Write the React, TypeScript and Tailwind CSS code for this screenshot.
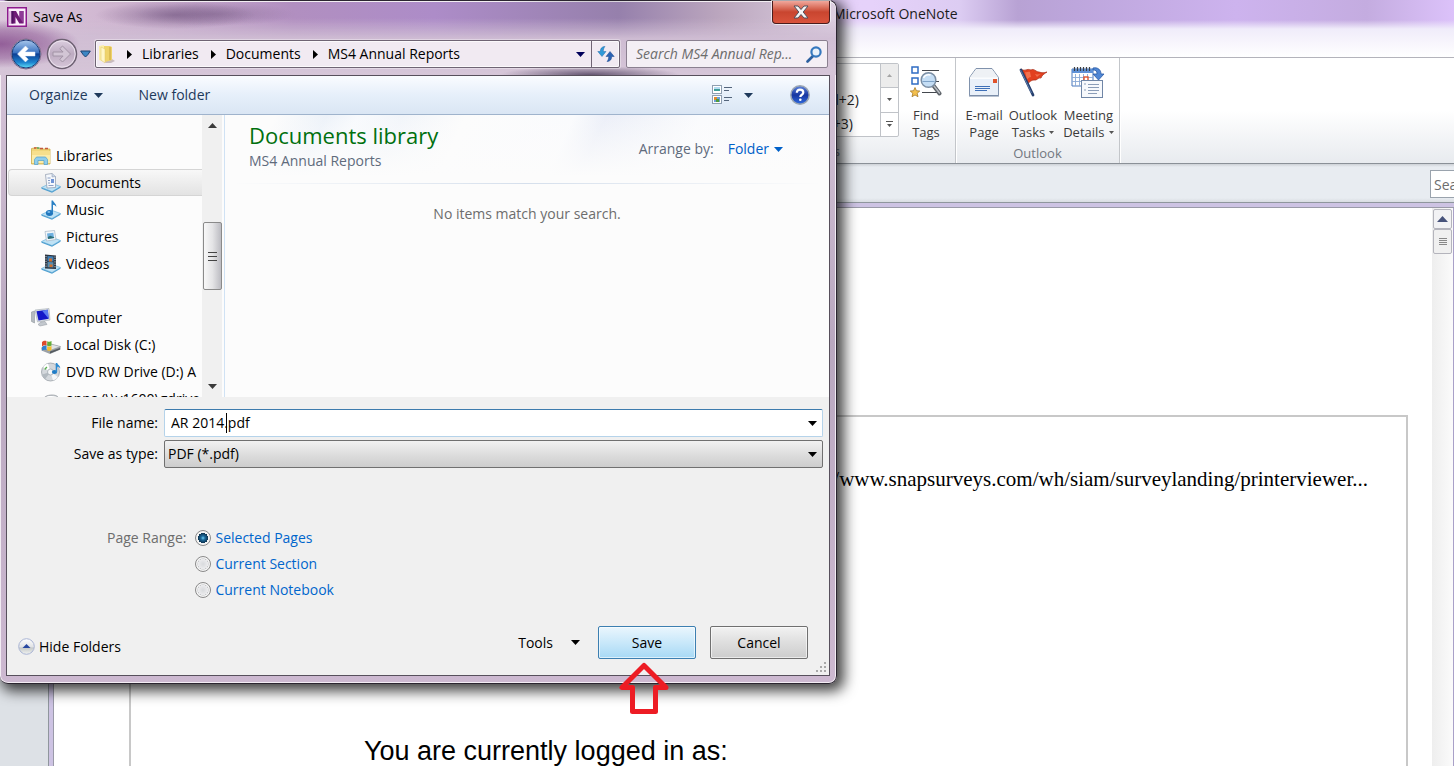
import React from "react";

const UI = "font-['Open_Sans','Noto_Sans',sans-serif]";

function Caret({ className = "" }: { className?: string }) {
  return (
    <svg width="9" height="5" viewBox="0 0 9 5" className={className} aria-hidden="true">
      <path d="M0 0h9L4.500 5z" fill="currentColor" />
    </svg>
  );
}

function Crumb({ children }: { children: string }) {
  return (
    <li className="flex items-center">
      <svg width="5" height="9" viewBox="0 0 5 9" className="mr-2.5" aria-hidden="true">
        <path d="M0 0v9l5-4.500z" fill="#000" />
      </svg>
      <a href="#crumb" className="mr-3">{children}</a>
    </li>
  );
}

/* ---------- dialog icons ---------- */

function OneNoteIcon() {
  return (
    <svg width="20" height="20" viewBox="0 0 20 20" aria-hidden="true">
      <rect x="0.75" y="0.75" width="18.500" height="18.500" fill="#fbeefb" stroke="#8d1a8d" strokeWidth="1.500" />
      <path d="M2 4h3v13H2z" fill="#e3bfe4" />
      <path d="M4.500 4H9l3.500 6.500V4h4v12.500h-4.200L8.500 10v6.500h-4z" fill="#6f1a76" />
      <path d="M12.500 4h4v12.500l-4-6z" fill="#8f3a97" />
      <path d="M4.500 4h2v12.500h-2z" fill="#4e1260" />
    </svg>
  );
}

function NavButtons() {
  return (
    <div className="flex items-center">
      <button aria-label="Back" className="size-8">
        <svg width="32" height="32" viewBox="0 0 32 32">
          <defs>
            <linearGradient id="nav-blue" x1="0" y1="0" x2="0" y2="1">
              <stop offset="0" stopColor="#a9c8ec" />
              <stop offset="0.45" stopColor="#3a72c0" />
              <stop offset="0.5" stopColor="#0c3f94" />
              <stop offset="0.8" stopColor="#1d84cf" />
              <stop offset="1" stopColor="#5fe0f8" />
            </linearGradient>
          </defs>
          <circle cx="16" cy="16" r="15" fill="#f0e4f2" stroke="#7c6a86" />
          <circle cx="16" cy="16" r="14" fill="url(#nav-blue)" stroke="#1b3a78" />
          <path d="M15.500 8 7.500 16l8 8 2.700-2.700-3.300-3.300H25v-4H14.900l3.300-3.300z" fill="#fff" stroke="#dce8f8" strokeWidth="0.500" strokeLinejoin="round" />
        </svg>
      </button>
      <button aria-label="Forward" className="ml-1 size-8">
        <svg width="32" height="32" viewBox="0 0 32 32">
          <defs>
            <linearGradient id="nav-grey" x1="0" y1="0" x2="0" y2="1">
              <stop offset="0" stopColor="#dccfe0" />
              <stop offset="0.5" stopColor="#bdabc1" />
              <stop offset="1" stopColor="#d8c8da" />
            </linearGradient>
          </defs>
          <circle cx="16" cy="16" r="14.500" fill="url(#nav-grey)" stroke="#6d6172" strokeWidth="1.500" />
          <circle cx="16" cy="16" r="13.200" fill="none" stroke="#ece2ee" />
          <path d="M16.500 8 24.500 16l-8 8-2.700-2.700 3.300-3.300H7v-4h10.100l-3.300-3.300z" fill="#d2c5d5" stroke="#a294a6" strokeLinejoin="round" />
        </svg>
      </button>
      <button aria-label="Recent locations" className="ml-0.5">
        <svg width="11" height="8" viewBox="0 0 11 8">
          <path d="M0.700 1h9.600L8 4.500 5.500 7 3 4.500z" fill="#3b86c4" stroke="#1c4270" strokeLinejoin="round" />
        </svg>
      </button>
    </div>
  );
}

function FolderIcon() {
  return (
    <svg width="18" height="20" viewBox="0 0 18 20" aria-hidden="true">
      <path d="M9 15h5l3 2-4 2H7z" fill="#c9bcbf" />
      <path d="M1 2l5-1v17l-5-2z" fill="#fbeea8" />
      <path d="M6 2h6l2 1v13l-7 2H6z" fill="#efd36b" />
      <path d="M3 3l4 2v14l-4-3z" fill="#fff6c8" stroke="#dcc469" strokeWidth="0.500" />
      <path d="M12 3v13" stroke="#c9a63c" />
    </svg>
  );
}

function RefreshIcon() {
  return (
    <svg width="18" height="16" viewBox="0 0 18 16" aria-hidden="true">
      <path d="M8 0.500C4.500.5 3.300 3 3.300 5.500H.8L5 10.500l4-5H6.300C6.300 3.500 6.800 1.800 8 .5z" fill="#2f9ad8" stroke="#246ba8" strokeWidth="0.500" />
      <path d="M10 15.500c3.500 0 4.700-2.500 4.700-5h2.500L13 5.500l-4 5h2.700c0 2-.5 3.700-1.700 5z" fill="#2a62b4" stroke="#1e4a8c" strokeWidth="0.500" />
    </svg>
  );
}

function SearchIcon() {
  return (
    <svg width="17" height="17" viewBox="0 0 17 17" aria-hidden="true">
      <path d="M7 10l-5.500 5.500" stroke="#2b5f9f" strokeWidth="2.600" strokeLinecap="round" />
      <circle cx="10" cy="6" r="4.600" fill="#e8f1fa" stroke="#3578be" strokeWidth="2.200" />
    </svg>
  );
}

function ViewIcon() {
  return (
    <svg width="21" height="20" viewBox="0 0 21 20" aria-hidden="true">
      <rect x="0.500" y="0.500" width="9" height="8" fill="#fff" stroke="#8f9eb0" />
      <rect x="2" y="2" width="6" height="2" fill="#b5dcf3" />
      <rect x="2" y="4" width="6" height="2" fill="#3f9d96" />
      <rect x="0.500" y="10.500" width="9" height="8" fill="#fff" stroke="#8f9eb0" />
      <rect x="2" y="12" width="6" height="5" fill="#6e9fd8" />
      <rect x="2" y="12" width="3" height="3" fill="#e08a2e" />
      <rect x="4" y="14" width="3" height="3" fill="#4f9c3a" />
      <path d="M12 2.500h8M12 5.500h5M12 12.500h8M12 15.500h5" stroke="#54657c" />
    </svg>
  );
}

function HelpIcon() {
  return (
    <svg width="20" height="20" viewBox="0 0 20 20" aria-hidden="true">
      <defs>
        <linearGradient id="help-fill" x1="0" y1="0" x2="0" y2="1">
          <stop offset="0" stopColor="#5f86dc" />
          <stop offset="0.5" stopColor="#1736a0" />
          <stop offset="1" stopColor="#2f6be0" />
        </linearGradient>
      </defs>
      <circle cx="10" cy="10" r="9.200" fill="url(#help-fill)" stroke="#9aa5b2" strokeWidth="1.500" />
      <path d="M6.800 7.800C6.800 5.600 8.200 4.600 10 4.600s3.300 1 3.300 2.900c0 2.300-3 2.200-3 4.500" fill="none" stroke="#fff" strokeWidth="2.200" />
      <circle cx="10.300" cy="14.700" r="1.300" fill="#fff" />
    </svg>
  );
}

function Tray() {
  return (
    <>
      <path d="M0.500 14.500 10 10l9.500 3.500L11 18.500z" fill="#bfe2f5" stroke="#6fb4dc" strokeWidth="0.700" />
      <path d="M0.500 14.500 11 18.500v1.200L0.500 15.700zM11 18.500l8.500-5v1.200l-8.500 5z" fill="#4f9fd0" />
    </>
  );
}

function TreeIcon({ kind }: { kind: string }) {
  return (
    <svg width="20" height="20" viewBox="0 0 20 20" className="shrink-0" aria-hidden="true">
      {kind === "libraries" && (
        <>
          <path d="M0.500 2.500 6 1.500l3 1.500h10v15H0.500z" fill="#f0d67a" stroke="#cfae4c" strokeWidth="0.800" />
          <path d="M3 2h2.500M9 2.500h3M14 2.500h3" stroke="#c25a3c" strokeWidth="1.400" />
          <path d="M6 2h2.500" stroke="#4f9f56" strokeWidth="1.400" />
          <path d="M1 5h18v12H1z" fill="#fbecab" />
          <path d="M1 5h18v4H1z" fill="#f6df8c" />
          <path d="M3.500 18.500v-5l2-2.500h9l2 2.500v5h-3.500v-4H7v4z" fill="#8fcdec" stroke="#4d9fcd" strokeWidth="0.700" />
        </>
      )}
      {kind === "documents" && (
        <>
          <Tray />
          <path d="M4.500 1.500 11 0.500l3.500 3v11l-8.500.5z" fill="#f5f8fc" stroke="#8a97ab" strokeWidth="0.700" />
          <path d="M11 .5v3.500l3.500-.5" fill="#c9d6e8" stroke="#8a97ab" strokeWidth="0.500" />
          <path d="M6.500 5h3M7 7.500h2M7 10h2M7.500 12.500h5" stroke="#8094bd" strokeWidth="0.900" />
          <path d="M10 6h3v4h-3z" fill="#6f94d6" />
        </>
      )}
      {kind === "music" && (
        <>
          <Tray />
          <ellipse cx="8.500" cy="13" rx="3.600" ry="2.900" fill="#1f76bd" />
          <path d="M10.500 13V0.500h1.500c.3 2 3.500 3 3.300 6.500-.8-1.500-2-2.200-3.300-2.300V13z" fill="#2a80c4" />
          <ellipse cx="7.800" cy="12" rx="1.500" ry="0.900" fill="#79b9e8" />
        </>
      )}
      {kind === "pictures" && (
        <>
          <Tray />
          <path d="M4 4.500 13.500 3.500l1.500 9-9.500 1.500z" fill="#f3f6f9" stroke="#a5b5c4" strokeWidth="0.700" />
          <path d="M6 6.500l6.300-.7.8 5.200-6.200.9z" fill="#6fb0e0" />
          <path d="M6.700 10l2.600-1.200 3.800 1.400.1.900-6.200.9z" fill="#2d6f78" />
        </>
      )}
      {kind === "videos" && (
        <>
          <Tray />
          <path d="M4 0.500 15 1.500v13.500l-11-.5z" fill="#2d3540" />
          <path d="M5 2v12M14 2.500v12" stroke="#c7d0d8" strokeWidth="1" strokeDasharray="1.200 1.200" />
          <path d="M6.500 2l6 .5v5l-6-.3z" fill="#3f7fb6" />
          <path d="M6.500 8l6 .3v5.200l-6-.2z" fill="#5a8fb2" />
          <path d="M8 4.500h3v3H8zM8.500 10.500h3v2.500h-3z" fill="#d0702e" />
        </>
      )}
      {kind === "computer" && (
        <>
          <path d="M0.500 4 3.500 3v12l-3-1.500z" fill="#b4bac0" stroke="#858c93" strokeWidth="0.500" />
          <path d="M4 2l14-1.500 1 11.500-12.500 2z" fill="#d7dce2" stroke="#a5acb4" strokeWidth="0.600" />
          <path d="M5.500 3.200l11.300-1.400.9 9-10.200 1.700z" fill="#1418c8" />
          <path d="M11 2.600l5.800-.8.9 9z" fill="#5b7cf0" />
          <path d="M10 14l4-.5 2 3-7 1.500-2-1.500z" fill="#c3c8ce" stroke="#8e959d" strokeWidth="0.500" />
        </>
      )}
      {kind === "disk" && (
        <>
          <path d="M0.500 13 8 8.500l11.500 3v3L9 19l-8.500-3.500z" fill="#9ba1a6" />
          <path d="M0.500 13 8 8.500l11.500 3L9 15.500z" fill="#dfe3e6" stroke="#888e93" strokeWidth="0.500" />
          <path d="M9 16.500l10-3.500v1.500L9 18.500z" fill="#555b60" />
          <path d="M1 7c1.500-1.500 3-1.500 4.500-1v4.500c-1.500-.5-3-.5-4.500 1z" fill="#dc4a2c" />
          <path d="M6.200 6.200C8 7 9 7 10.500 6v4.500c-1.500 1-2.500 1-4.300.2z" fill="#64ad38" />
          <path d="M1 12c1.500-1.500 3-1.500 4.500-1v4c-1.500-.5-3-.5-4.500.5z" fill="#2f7fd0" />
          <path d="M6.200 11.200c1.800.8 2.800.8 4.300-.2v4c-1.500 1-2.500 1-4.300.2z" fill="#f3bd2c" />
        </>
      )}
      {kind === "dvd" && (
        <>
          <circle cx="9.500" cy="10" r="9" fill="#d4d8dc" stroke="#8f979e" strokeWidth="0.700" />
          <path d="M9.500 10 2 5a9 9 0 0 1 5-3.600z" fill="#fff" />
          <path d="M9.500 10l7.500 5a9 9 0 0 1-5 3.600z" fill="#f5f7f9" />
          <path d="M9.500 10 1 12.500a9 9 0 0 0 3 4.700z" fill="#b3bac0" />
          <circle cx="9.500" cy="10" r="3" fill="#f4f6f8" stroke="#9aa2a9" strokeWidth="0.700" />
          <path d="M4 7.500a6 6 0 0 1 2-2.500" stroke="#58b04c" strokeWidth="1.500" fill="none" />
          <ellipse cx="13.500" cy="10" rx="2.600" ry="2.100" fill="#1f7cc6" />
          <path d="M14.700 10V1h1.500c.3 1.700 3.300 2.500 3 5.500-.8-1.300-1.900-1.700-3-1.700V10z" fill="#2b8ad2" />
        </>
      )}
      {kind === "network" && (
        <>
          <path d="M2 12c0-4 4-6 9-6s7 2 7 5v4H2z" fill="#c9cdd1" stroke="#8f959b" strokeWidth="0.700" />
          <path d="M4 10c2-2.500 7-3 11-1.500" stroke="#fff" strokeWidth="1.500" fill="none" />
        </>
      )}
    </svg>
  );
}

const tree = [
  { label: "Libraries", kind: "libraries", root: true },
  { label: "Documents", kind: "documents", selected: true },
  { label: "Music", kind: "music" },
  { label: "Pictures", kind: "pictures" },
  { label: "Videos", kind: "videos" },
  { label: "Computer", kind: "computer", root: true, gap: true },
  { label: "Local Disk (C:)", kind: "disk" },
  { label: "DVD RW Drive (D:) A", kind: "dvd" },
  { label: "apps (\\\\v1600\\gdrive", kind: "network" },
];

function FolderTree() {
  return (
    <nav aria-label="Folders" className="min-w-0 flex-1 overflow-hidden pt-[27px]">
      <ul className="flex flex-col">
        {tree.map((n) => (
          <li key={n.label} className={n.gap ? "mt-[27px]" : ""}>
            <a
              href="#folder"
              className={
                "ml-px flex h-[27px] items-center gap-[5px] whitespace-nowrap border " +
                (n.root ? "pl-[22px] " : "pl-8 ") +
                (n.selected
                  ? "rounded-l-sm border-r-0 border-[#d5d5d5] bg-linear-to-b from-[#f8f8f8] to-[#e3e3e3]"
                  : "border-transparent")
              }
            >
              <TreeIcon kind={n.kind} />
              <span>{n.label}</span>
            </a>
          </li>
        ))}
      </ul>
    </nav>
  );
}

function TreeScrollbar() {
  return (
    <div className="flex w-5 flex-col items-center bg-[#f0f0f0] pt-2 pb-2" aria-hidden="true">
      <svg width="9" height="5" viewBox="0 0 9 5">
        <path d="M0 5h9L4.500 0z" fill="#3a3a3a" />
      </svg>
      <div className="mt-[94px] flex h-[68px] w-[19px] flex-col items-center justify-center gap-[3px] rounded-xs border border-[#8a8a8a] bg-linear-to-r from-[#f8f8f8] via-[#e4e4e6] to-[#bcbcc2]">
        <span className="h-px w-[9px] bg-[#444]" />
        <span className="h-px w-[9px] bg-[#444]" />
        <span className="h-px w-[9px] bg-[#444]" />
      </div>
      <Caret className="mt-auto text-[#3a3a3a]" />
    </div>
  );
}

function SaveDialog() {
  return (
    <section
      role="dialog"
      aria-labelledby="dialog-title"
      className={
        UI +
        " absolute left-0 top-0 w-[837px] rounded-lg border-t border-r border-b border-[#2b2530] bg-linear-to-b from-[#d6c4d8] from-10% via-[#b9a8c0] via-50% to-[#cdb9d1] px-1.5 pb-[7px] text-sm text-black shadow-[4px_4px_14px_3px_rgba(0,0,0,0.75),inset_0_0_0_1px_rgba(255,255,255,0.75)]"
      }
    >
      <header className="-mx-1.5 rounded-tr-lg border-t border-white/70 bg-[radial-gradient(ellipse_80px_14px_at_175px_13px,rgba(112,84,126,0.6)_0%,transparent_100%),radial-gradient(ellipse_80px_12px_at_215px_12px,rgba(112,84,126,0.4)_0%,transparent_100%),radial-gradient(ellipse_90px_9px_at_590px_73px,rgba(70,56,86,0.8)_0%,transparent_100%),radial-gradient(ellipse_80px_24px_at_0px_42px,rgba(140,84,146,0.9)_0%,rgba(140,84,146,0.5)_60%,transparent_100%),linear-gradient(to_bottom,transparent_0%,transparent_22%,rgba(208,190,212,0.95)_50%,#d6c6d8_100%),linear-gradient(to_right,#dcc8dc_0%,#cfb5d0_14%,#b18fc0_35%,#ad8cc8_52%,#9680ac_74%,#bba6be_86%,#dccfe0_100%)] pl-1.5 pr-2">
        <div className="flex h-[33px] items-start justify-between">
          <h1 id="dialog-title" className="flex items-center gap-1.5 pt-[5px] pl-px">
            <OneNoteIcon />
            <span>Save As</span>
          </h1>
          <button
            aria-label="Close"
            className="-mt-px mr-[-2px] flex h-[23px] w-[58px] items-center justify-center rounded-b-sm border border-t-0 border-[#4a1c1c] bg-linear-to-b from-[#f0a79c] from-0% via-[#c9452f] via-50% to-[#d9533c] shadow-[0_0_0_1px_rgba(255,255,255,0.6)]"
          >
            <svg width="16" height="14" viewBox="0 0 16 14">
              <path d="M1 1h4l3 3.500L11 1h4l-4.800 6L15 13h-4L8 9.500 5 13H1l4.800-6z" fill="#f5f5f5" stroke="#51505c" strokeWidth="1" />
            </svg>
          </button>
        </div>
        <div className="flex h-10 items-center pl-1 pb-0.5">
          <NavButtons />
          <div className="ml-1 flex h-7 flex-1 items-center rounded-xs border border-[#6f6474] bg-[#f1eaf2] shadow-[inset_0_0_0_1px_rgba(255,255,255,0.7),0_0_0_1px_rgba(255,255,255,0.35)]">
            <span className="ml-0.5 mr-[11px]">
              <FolderIcon />
            </span>
            <ol className="flex flex-1 items-center whitespace-nowrap">
              <Crumb>Libraries</Crumb>
              <Crumb>Documents</Crumb>
              <Crumb>MS4 Annual Reports</Crumb>
            </ol>
            <button aria-label="Previous locations" className="flex h-full w-[22px] items-center justify-center text-[#00005a]">
              <Caret />
            </button>
            <button aria-label="Refresh" className="flex h-full w-7 items-center justify-center border-l border-[#6f6474]">
              <RefreshIcon />
            </button>
          </div>
          <div className="ml-1.5 flex h-7 w-[202px] items-center rounded-xs border border-[#8b8090] bg-[#f4eff5] pl-[9px] pr-1">
            <input
              type="text"
              aria-label="Search"
              placeholder="Search MS4 Annual Rep..."
              className="min-w-0 flex-1 bg-transparent italic outline-none placeholder:text-[#6d6d6d]"
            />
            <button aria-label="Start search">
              <SearchIcon />
            </button>
          </div>
        </div>
      </header>

      <div className="border border-[#57505c] bg-[#f0f0f0]">
        <div className="flex h-[39px] items-center border-b border-[#9fb3cc] bg-linear-to-b from-[#fafcff] from-0% via-[#e6effa] via-50% to-[#dae6f4] pl-[22px] pr-[19px] text-[#1e395b]">
          <button className="flex items-center gap-1.5">
            Organize <Caret />
          </button>
          <button className="ml-9">New folder</button>
          <button aria-label="Change view" className="ml-auto flex items-center gap-[11px]">
            <ViewIcon />
            <Caret />
          </button>
          <button aria-label="Help" className="ml-[37px]">
            <HelpIcon />
          </button>
        </div>

        <div className="flex h-[282px] bg-[#fcfcfc]">
          <div className="flex w-[218px] border-r border-[#d0e2f4] pr-0.5">
            <FolderTree />
            <TreeScrollbar />
          </div>
          <div className="flex flex-1 flex-col">
            <div className="flex h-[68px] items-center justify-between bg-[linear-gradient(to_bottom,transparent_0%,#fcfcfc_90%),linear-gradient(115deg,#fcfcfc_8%,#edf2f9_16%,#f8fafd_21%,#f2f5fa_28%,#fcfcfc_38%,#fafbfd_55%,#eceff8_60%,#fafbfd_75%,#fcfcfc_100%)] pl-6 pr-[46px]">
              <div className="pb-1">
                <h2 className="text-[22px] leading-7 text-[#00700e]">Documents library</h2>
                <p className="leading-6 text-[#5f6b7c]">MS4 Annual Reports</p>
              </div>
              <div className="flex items-center gap-3.5 text-[#5f6b7c]">
                Arrange by:
                <button className="flex items-center gap-[5px] text-[#0060c8]">
                  Folder <Caret />
                </button>
              </div>
            </div>
            <div className="mx-2 h-px bg-linear-to-r from-transparent via-[#d5dfec] to-transparent" />
            <p className="pt-5 text-center text-[#6d6d6d]">No items match your search.</p>
          </div>
        </div>

        <form className="flex h-[278px] flex-col pt-3 pr-1.5" onSubmit={(e) => e.preventDefault()}>
          <div className="grid grid-cols-[151px_1fr] items-center gap-x-1.5 gap-y-[3px]">
            <label htmlFor="file-name" className="text-right">File name:</label>
            <div className="relative flex items-center">
              <input
                id="file-name"
                type="text"
                defaultValue="AR 2014.pdf"
                className="h-7 w-full rounded-xs border border-[#b5d3ea] border-t-[#3d7bad] bg-white pl-1.5 pb-0.5 outline-none"
              />
              <span className="absolute left-[62px] top-1 h-5 w-px bg-black" />
              <Caret className="absolute right-1.5" />
            </div>
            <label htmlFor="save-type" className="text-right">Save as type:</label>
            <div className="relative flex items-center">
              <select
                id="save-type"
                className="h-7 w-full appearance-none rounded-xs border border-[#707070] bg-linear-to-b from-[#f2f2f2] from-0% via-[#dedede] via-50% to-[#cdcdcd] pl-[3px] outline-none"
              >
                <option>PDF (*.pdf)</option>
              </select>
              <Caret className="pointer-events-none absolute right-1.5" />
            </div>
          </div>

          <fieldset className="mt-[57px] ml-[100px] flex">
            <legend className="float-left h-[26px] pr-[9px] leading-[26px] text-[#6d6d6d]">Page Range:</legend>
            <div className="flex flex-col text-[#0066cc]">
              {["Selected Pages", "Current Section", "Current Notebook"].map((t, i) => (
                <label key={t} className="flex h-[26px] items-center gap-1">
                  <input
                    type="radio"
                    name="range"
                    defaultChecked={i === 0}
                    className="size-4 appearance-none rounded-full border border-[#8a8a8a] bg-[radial-gradient(circle,#d8dadd_0,#ececee_5px,#bfc1c4_5px,#f4f4f4_6px)] checked:bg-[radial-gradient(circle_at_50%_50%,#6fd0f5_0,#1c6a9c_2px,#0d3350_5px,#f4f4f4_5px)]"
                  />
                  {t}
                </label>
              ))}
            </div>
          </fieldset>

          <div className="mt-[23px] flex items-center pl-[11px] pr-[15px]">
            <button type="button" className="flex items-center gap-1 pt-2">
              <svg width="17" height="17" viewBox="0 0 17 17" aria-hidden="true">
                <defs>
                  <linearGradient id="hide-fill" x1="0" y1="0" x2="0" y2="1">
                    <stop offset="0" stopColor="#fff" />
                    <stop offset="0.5" stopColor="#e2e4e6" />
                    <stop offset="0.6" stopColor="#c6caca" />
                    <stop offset="1" stopColor="#f2f4f2" />
                  </linearGradient>
                </defs>
                <circle cx="8.500" cy="8.500" r="7.800" fill="url(#hide-fill)" stroke="#a9b4d4" />
                <path d="M4.500 10h8l-4-4z" fill="#2848a0" />
              </svg>
              Hide Folders
            </button>
            <button type="button" className="ml-auto mr-[18px] flex items-center gap-[18px]">
              Tools <Caret />
            </button>
            <button
              type="submit"
              className="h-[33px] w-[98px] rounded-xs border border-[#3c7fb1] bg-linear-to-b from-[#eaf6fd] from-0% via-[#c9e8fa] via-50% to-[#a7d9f5] shadow-[inset_0_0_0_1px_rgba(255,255,255,0.6)]"
            >
              Save
            </button>
            <button
              type="button"
              className="ml-3.5 h-[33px] w-[98px] rounded-xs border border-[#707070] bg-linear-to-b from-[#f2f2f2] from-0% via-[#dedede] via-50% to-[#cdcdcd] shadow-[inset_0_0_0_1px_rgba(255,255,255,0.6)]"
            >
              Cancel
            </button>
          </div>
          <svg width="12" height="12" viewBox="0 0 12 12" className="mt-auto mb-0.5 self-end -mr-1" aria-hidden="true">
            <path d="M9 1h2v2H9zM5 5h2v2H5zM9 5h2v2H9zM1 9h2v2H1zM5 9h2v2H5zM9 9h2v2H9z" fill="#a9a9a9" />
          </svg>
        </form>
      </div>
    </section>
  );
}

/* ---------- OneNote window ---------- */

function FindTagsIcon() {
  return (
    <svg width="32" height="32" viewBox="0 0 32 32" aria-hidden="true">
      <rect x="2" y="1" width="6" height="6" fill="#fff" stroke="#2f6cc4" strokeWidth="1.500" />
      <rect x="2" y="12" width="6" height="6" fill="#fff" stroke="#2f6cc4" strokeWidth="1.500" />
      <path d="M12 4.500h17M12 15.500h17M12 26.500h17" stroke="#44484e" strokeWidth="1.200" />
      <path d="M5 21.500l1.400 3.200 3.400.3-2.600 2.300.8 3.400L5 29l-3 1.700.8-3.400L.2 25l3.400-.3z" fill="#f4c04e" stroke="#9a6d1a" strokeWidth="0.700" />
      <path d="M23 19l6.500 8.500" stroke="#5d6268" strokeWidth="4" strokeLinecap="round" />
      <path d="M24 20l5.500 7" stroke="#b8bdc3" strokeWidth="1.500" strokeLinecap="round" />
      <circle cx="18.500" cy="14" r="7.300" fill="#c5def5" stroke="#7b8ea3" strokeWidth="1.500" />
      <path d="M12.500 15.500h12" stroke="#7fa3c8" />
      <path d="M13.500 12a5.500 5.500 0 0 1 7-3" stroke="#fff" strokeWidth="1.500" fill="none" />
    </svg>
  );
}

function EnvelopeIcon() {
  return (
    <svg width="32" height="32" viewBox="0 0 32 32" aria-hidden="true">
      <path d="M1.500 11.500 8 2.500h16l6.500 9V29.500h-29z" fill="#fbfcfe" stroke="#8092ac" />
      <path d="M2 11.500 8.300 3h15.400L30 11.500z" fill="#eef1f5" />
      <path d="M2 13h28v16H2z" fill="#e9f0f9" />
      <rect x="25" y="13" width="4" height="4" fill="#e0532c" />
      <path d="M7 20.500h15M7 22.500h15M7 24.500h12" stroke="#3e70b8" />
      <path d="M1 30h30" stroke="#7487a4" />
    </svg>
  );
}

function FlagIcon() {
  return (
    <svg width="32" height="32" viewBox="0 0 32 32" aria-hidden="true">
      <path d="M4 3c4 3 6-1 10 1 3-2 5 2 8 2 3 1 5 1 8 0-3 2-5 3-6 6-3-1-4 3-7 2-3 0-4 2-7 4z" fill="#e2401f" stroke="#a82a14" strokeWidth="0.700" />
      <path d="M8 6c2 1 3-1 5 0l1 5c-2 0-3 2-4 2zM18 8c2 1 4 0 6 0-2 1-3 2-4 3z" fill="#f2704e" />
      <path d="M4 4l12 25" stroke="#27406e" strokeWidth="2.800" strokeLinecap="round" />
      <path d="M3.500 4l11 23" stroke="#6a8abb" strokeWidth="0.800" />
    </svg>
  );
}

function MeetingIcon() {
  return (
    <svg width="34" height="34" viewBox="0 0 34 34" aria-hidden="true">
      <path d="M1 3h21v17H1z" fill="#fff" stroke="#4a78bd" />
      <path d="M1 3h21v4H1z" fill="#5f92d8" />
      <path d="M4.500 8v12M8.500 8v12M12.500 8v12M16.500 8v12M1 11.500h21M1 15.500h21" stroke="#8aa9d6" strokeWidth="0.900" />
      <path d="M3.500 1v4M6.500 1v4M9.500 1v4M12.500 1v4M15.500 1v4M18.500 1v4" stroke="#3b3f46" strokeWidth="1.200" />
      <rect x="13" y="11" width="4" height="4" fill="#fff" stroke="#e0532c" strokeWidth="1.400" />
      <path d="M22 2c5-1 8 2 8 6h3l-5.500 6L22 8h4c0-3-1-4-4-4z" fill="#4f86d4" stroke="#2a5aa6" strokeWidth="0.800" />
      <rect x="10.500" y="14.500" width="21" height="17" fill="#f7f9fc" stroke="#7086a6" />
      <path d="M13 18h2M13 24h2M17 18.500h11M17 21.500h11M17 24.500h11M17 27.500h9" stroke="#8b9db8" />
    </svg>
  );
}

function RibbonButton({
  icon,
  lines,
  menu,
}: {
  icon: React.ReactNode;
  lines: [string, string];
  menu?: boolean;
}) {
  return (
    <button className="flex flex-col items-center whitespace-nowrap text-[13px] leading-[17px] text-[#3b3b3b]">
      <span className="flex h-[41px] items-start justify-center">{icon}</span>
      <span>{lines[0]}</span>
      <span className="flex items-center gap-1">
        {lines[1]}
        {menu && (
          <svg width="5" height="3" viewBox="0 0 5 3" aria-hidden="true">
            <path d="M0 0h5L2.500 3z" fill="#555" />
          </svg>
        )}
      </span>
    </button>
  );
}

function Ribbon() {
  return (
    <div className="flex h-[107px] border-t border-b border-t-[#b3b3bb] border-b-[#8a9097] bg-linear-to-b from-white from-50% to-[#e8ebef]">
      <div className="flex w-[956px] justify-end border-r border-[#c3c6ca] shadow-[1px_0_0_#fff]">
        <div className="flex flex-col items-end">
          <div className="mt-[5px] flex h-[74px] w-[180px] rounded-xs border border-[#c0c3c8] bg-white">
            <div className="flex flex-1 flex-col items-end justify-end pr-[21px] leading-6 text-[#222]">
              <span>To Do (Ctrl+2)</span>
              <span className="pr-1.5">Tag (Ctrl+3)</span>
            </div>
            <div className="flex w-[18px] flex-col divide-y divide-[#c0c3c8] border-l border-[#c0c3c8] text-[#555]">
              <button aria-label="Scroll up" className="flex flex-1 items-center justify-center bg-[#ececec]">
                <svg width="5" height="3" viewBox="0 0 5 3"><path d="M0 3h5L2.500 0z" fill="#a5a5a5" /></svg>
              </button>
              <button aria-label="Scroll down" className="flex flex-1 items-center justify-center">
                <svg width="5" height="3" viewBox="0 0 5 3"><path d="M0 0h5L2.500 3z" fill="#555" /></svg>
              </button>
              <button aria-label="More tags" className="flex flex-1 items-center justify-center">
                <svg width="7" height="6" viewBox="0 0 7 6"><path d="M0 .5h7" stroke="#555" /><path d="M1 3h5L3.500 6z" fill="#555" /></svg>
              </button>
            </div>
          </div>
          <span className="pr-[59px] pt-1.5 text-[13px] leading-[17px] text-[#72777f]">Tags</span>
        </div>
        <div className="flex w-14 justify-center pt-2 pr-0.5">
          <RibbonButton icon={<FindTagsIcon />} lines={["Find", "Tags"]} />
        </div>
      </div>
      <div className="flex w-[164px] flex-col items-center border-r border-[#c3c6ca] pt-2 shadow-[1px_0_0_#fff]">
        <div className="flex gap-1.5 pl-1">
          <RibbonButton icon={<EnvelopeIcon />} lines={["E-mail", "Page"]} />
          <RibbonButton icon={<FlagIcon />} lines={["Outlook", "Tasks"]} menu />
          <RibbonButton icon={<MeetingIcon />} lines={["Meeting", "Details"]} menu />
        </div>
        <span className="pt-1 text-[13px] leading-[17px] text-[#72777f]">Outlook</span>
      </div>
    </div>
  );
}

function PageScrollbar() {
  return (
    <div className="flex w-[22px] shrink-0 flex-col items-center border-r border-[#a9a0c8] bg-linear-to-r from-[#eeeeee] to-[#fbfbfb] pt-px" aria-hidden="true">
      <div className="flex h-5 w-[19px] items-center justify-center rounded-xs border border-[#b4b4bc] bg-[#f2f2f4]">
        <svg width="11" height="6" viewBox="0 0 11 6"><path d="M0 6h11L5.500 0z" fill="#46527a" /></svg>
      </div>
      <div className="flex h-[25px] w-[19px] flex-col items-center justify-center gap-px rounded-xs border border-[#b4b4bc] bg-[#f0f0f0]">
        <span className="h-px w-2 bg-[#888]" />
        <span className="h-px w-2 bg-[#888]" />
        <span className="h-px w-2 bg-[#888]" />
        <span className="h-px w-2 bg-[#888]" />
      </div>
    </div>
  );
}

function NotebookWindow() {
  return (
    <main className={UI + " flex h-screen flex-col overflow-hidden bg-white text-sm"}>
      <div className="h-[57px] bg-[linear-gradient(to_bottom,transparent_0,transparent_20px,#f0ecfa_29px,#fff_57px),linear-gradient(to_right,#e3c8fa_0%,#e6d2fa_60%,#dcccf2_66%,#b8a2d4_70%,#bda6dc_74%,#cdb3ee_85%,#c4ace0_94%,#dcc2fa_100%)] pl-[833px] pt-1 text-[#1c1c1c]">
        Microsoft OneNote
      </div>
      <Ribbon />
      <div className="flex h-[39px] shrink-0 items-center justify-end overflow-hidden border-b border-[#8f969d] bg-[linear-gradient(to_bottom,#cdd1d6_0,#e8ecf1_3px,#e8ecf1_34px,#d9dde2_100%)]">
        <input
          type="text"
          aria-label="Search notebooks"
          placeholder="Search All Notebooks"
          className="mt-0.5 h-7 w-6 border border-r-0 border-[#9aa3ad] bg-white pl-[3px] placeholder:text-[#6d6d6d]"
        />
      </div>
      <div className="flex min-h-0 flex-1">
        <div className="w-12 shrink-0 bg-[#dde1e6]" />
        <div className="flex min-w-0 flex-1 border-l border-[#8f969d] bg-[#cdc3e3] pl-1 pt-1">
          <div className="flex min-w-0 flex-1 border-l border-t border-[#9a9aa8] bg-white">
            <div className="flex min-w-0 flex-1 pl-[75px] pr-6 pt-[207px]">
              <article className="flex flex-1 flex-col border-2 border-b-0 border-[#c8c8c8] text-black">
                <p className="pr-[38px] pt-[50px] text-right font-['Liberation_Serif',serif] text-[21px] leading-6">
                  https://www.snapsurveys.com/wh/siam/surveylanding/printerviewer...
                </p>
                <p className="whitespace-nowrap pl-[233px] pt-[244px] font-['Liberation_Sans',sans-serif] text-[27px] leading-8">
                  You are currently logged in as:
                </p>
              </article>
            </div>
            <PageScrollbar />
          </div>
        </div>
      </div>
    </main>
  );
}

export default function App() {
  return (
    <div className="relative min-h-screen overflow-hidden">
      <NotebookWindow />
      <SaveDialog />
      <svg width="50" height="52" viewBox="0 0 50 52" className="absolute left-[619px] top-[662px]" aria-hidden="true">
        <path d="M25 3.500 3 25.500h10.500V49.500h23V25.500H47z" fill="none" stroke="#ed1c24" strokeWidth="5" strokeLinejoin="round" />
      </svg>
    </div>
  );
}
